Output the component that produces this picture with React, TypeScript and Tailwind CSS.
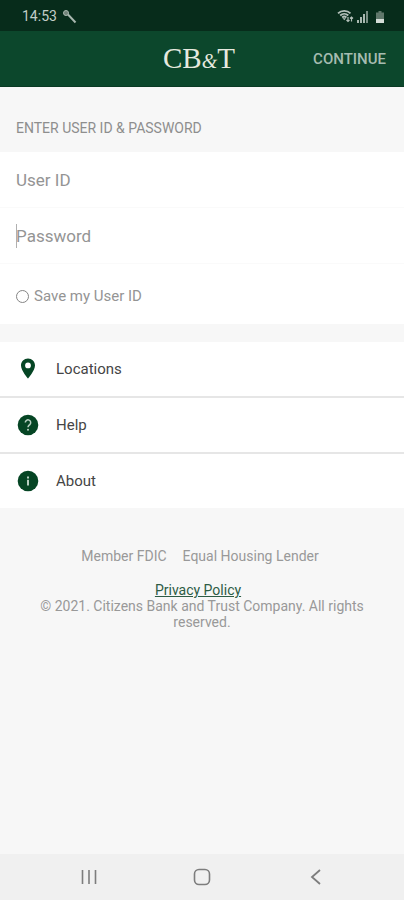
import { useState } from "react";

const links = [
  { label: "Locations", icon: PinIcon },
  { label: "Help", icon: HelpIcon },
  { label: "About", icon: InfoIcon },
];

function PinIcon() {
  return (
    <svg width="24" height="24" viewBox="0 0 24 24" fill="#054524" aria-hidden="true">
      <path
        fillRule="evenodd"
        d="M12 1.500C8.100 1.500 5 4.600 5 8.500c0 5 7 13 7 13s7-8 7-13c0-3.900-3.100-7-7-7zm0 9.800a2.900 2.900 0 1 1 0-5.800 2.900 2.900 0 0 1 0 5.800z"
      />
    </svg>
  );
}

function HelpIcon() {
  return (
    <svg width="24" height="24" viewBox="0 0 24 24" fill="none" aria-hidden="true">
      <circle cx="12" cy="12" r="10.300" fill="#054524" />
      <path d="M9.300 9.600a2.700 2.700 0 1 1 4.500 2c-1 .9-1.800 1.400-1.800 2.700" stroke="#b9cfc2" strokeWidth="1.500" />
      <circle cx="12" cy="16.800" r="1" fill="#b9cfc2" />
    </svg>
  );
}

function InfoIcon() {
  return (
    <svg width="24" height="24" viewBox="0 0 24 24" fill="#b9cfc2" aria-hidden="true">
      <circle cx="12" cy="12" r="10.300" fill="#054524" />
      <rect x="11" y="7.500" width="2" height="2" />
      <rect x="11" y="10.800" width="2" height="5.700" />
    </svg>
  );
}

function StatusBar() {
  return (
    <div className="flex h-[31px] items-center justify-between bg-[#072c1b] pt-px pr-5 pl-[22px] text-[#c3cec8]">
      <div className="flex items-center gap-[5px] text-[14px] leading-4">
        <span>14:53</span>
        <svg width="15" height="15" viewBox="0 0 15 15" fill="none" stroke="#a9b8b0" aria-hidden="true">
          <circle cx="4" cy="4" r="2.500" fill="#718379" strokeWidth="1" />
          <path d="M6 5.500l7.500 8" strokeWidth="2" />
        </svg>
      </div>
      <div className="flex items-center">
        <svg width="17" height="14" viewBox="0 0 17 14" fill="none" stroke="#b4c1ba" aria-hidden="true">
          <path d="M1 4.300C4.500 1 10 1 13.500 4.300M3.200 6.500c2.300-2.200 5.800-2.200 8.100 0M5.200 8.500c1.300-1.200 2.900-1.200 4.200 0" strokeWidth="1.800" />
          <path d="M5.500 9.300h3.500l-1.700 2z" fill="#b4c1ba" stroke="none" />
          <path d="M11 8v4.500M9.500 11l1.500 1.500 1.500-1.500M14.500 12.500V8M13 9.500L14.500 8 16 9.500" strokeWidth="1.200" />
        </svg>
        <svg className="ml-[3px]" width="12" height="13" viewBox="0 0 12 13" fill="#a9b8b0" aria-hidden="true">
          <rect x="0" y="10" width="2" height="3" />
          <rect x="3" y="7" width="2" height="6" />
          <rect x="6" y="4" width="2" height="9" />
          <rect x="9" y="1" width="2" height="12" opacity="0.700" />
        </svg>
        <svg className="ml-[7px]" width="8" height="13" viewBox="0 0 8 13" aria-hidden="true">
          <path d="M2.500 1h3v1.500H8V9H0V2.500h2.500z" fill="#60776b" />
          <rect x="0" y="9" width="8" height="4" fill="#d5ddd8" />
        </svg>
      </div>
    </div>
  );
}

function Logo() {
  return (
    <span className="block font-['Liberation_Serif',serif] text-[29px] leading-9 text-[#e6e9df]">
      CB<span className="text-[20px] italic">&amp;</span>T
    </span>
  );
}

function LoginForm() {
  const [saveId, setSaveId] = useState(false);
  const [password, setPassword] = useState("");

  return (
    <form id="login" className="bg-white" onSubmit={(e) => e.preventDefault()}>
      <input
        type="text"
        aria-label="User ID"
        placeholder="User ID"
        className="block h-14 w-full border-b border-[#fafafa] px-4 text-[17px] text-[#333333] outline-none placeholder:text-[#949494]"
      />
      <div className="relative">
        <input
          type="password"
          aria-label="Password"
          placeholder="Password"
          value={password}
          onChange={(e) => setPassword(e.target.value)}
          className="block h-14 w-full border-b border-[#fafafa] px-4 text-[17px] text-[#333333] outline-none placeholder:text-[#949494]"
        />
        {!password && <span className="pointer-events-none absolute top-4 left-4 h-6 w-px bg-[#b0b0b0]" />}
      </div>
      <label className="flex h-[60px] items-center gap-[5px] px-4 pt-1 text-[15px] text-[#949494]">
        <input
          type="checkbox"
          checked={saveId}
          onChange={(e) => setSaveId(e.target.checked)}
          className="size-[13px] appearance-none rounded-full border border-[#858585] checked:bg-[#054524]"
        />
        Save my User ID
      </label>
    </form>
  );
}

function NavBar() {
  return (
    <nav className="flex h-[46px] items-center justify-around bg-[#f0f0f0] px-8 text-[#7d7d7d]">
      <button type="button" aria-label="Recent apps">
        <svg width="18" height="18" viewBox="0 0 18 18" stroke="currentColor" strokeWidth="1.600" aria-hidden="true">
          <path d="M2.500 2v14M9 2v14M15.500 2v14" />
        </svg>
      </button>
      <button type="button" aria-label="Home">
        <svg width="18" height="18" viewBox="0 0 18 18" fill="none" stroke="currentColor" strokeWidth="1.600" aria-hidden="true">
          <rect x="1.500" y="1.500" width="15" height="15" rx="4.500" />
        </svg>
      </button>
      <button type="button" aria-label="Back">
        <svg width="18" height="18" viewBox="0 0 18 18" fill="none" stroke="currentColor" strokeWidth="1.800" aria-hidden="true">
          <path d="M14 2L6 9l8 7" />
        </svg>
      </button>
    </nav>
  );
}

export default function App() {
  return (
    <div className="flex min-h-screen flex-col bg-[#f7f7f7] font-[Roboto,sans-serif]">
      <StatusBar />
      <header className="grid h-14 grid-cols-[1fr_auto_1fr] items-center border-b border-[#0a3a24] bg-[#0c472c] pt-[2px] pr-[18px] pl-3">
        <h1 className="col-start-2">
          <Logo />
        </h1>
        <button type="submit" form="login" className="justify-self-end text-[15px] font-medium text-[#a5bcb0]">
          CONTINUE
        </button>
      </header>

      <main className="flex-1">
        <h2 className="px-4 pt-[31px] pb-[14px] text-[14px] leading-5 text-[#8e8e8e]">ENTER USER ID &amp; PASSWORD</h2>
        <LoginForm />

        <ul className="mt-[18px] divide-y-2 divide-[#e6e6e6] bg-white">
          {links.map((l) => (
            <li key={l.label}>
              <a href="#" className="flex h-[54px] items-center gap-4 px-4 text-[15px] text-[#454545]">
                <l.icon />
                {l.label}
              </a>
            </li>
          ))}
        </ul>

        <footer className="px-8 pt-10 text-center text-[14px] leading-4 text-[#999999]">
          <p className="flex justify-center gap-4 pr-1">
            <span>Member FDIC</span>
            <span>Equal Housing Lender</span>
          </p>
          <p className="mt-[18px] pr-2">
            <a href="#" className="text-[#2d5c45] underline">
              Privacy Policy
            </a>
          </p>
          <p>© 2021. Citizens Bank and Trust Company. All rights reserved.</p>
        </footer>
      </main>

      <NavBar />
    </div>
  );
}
